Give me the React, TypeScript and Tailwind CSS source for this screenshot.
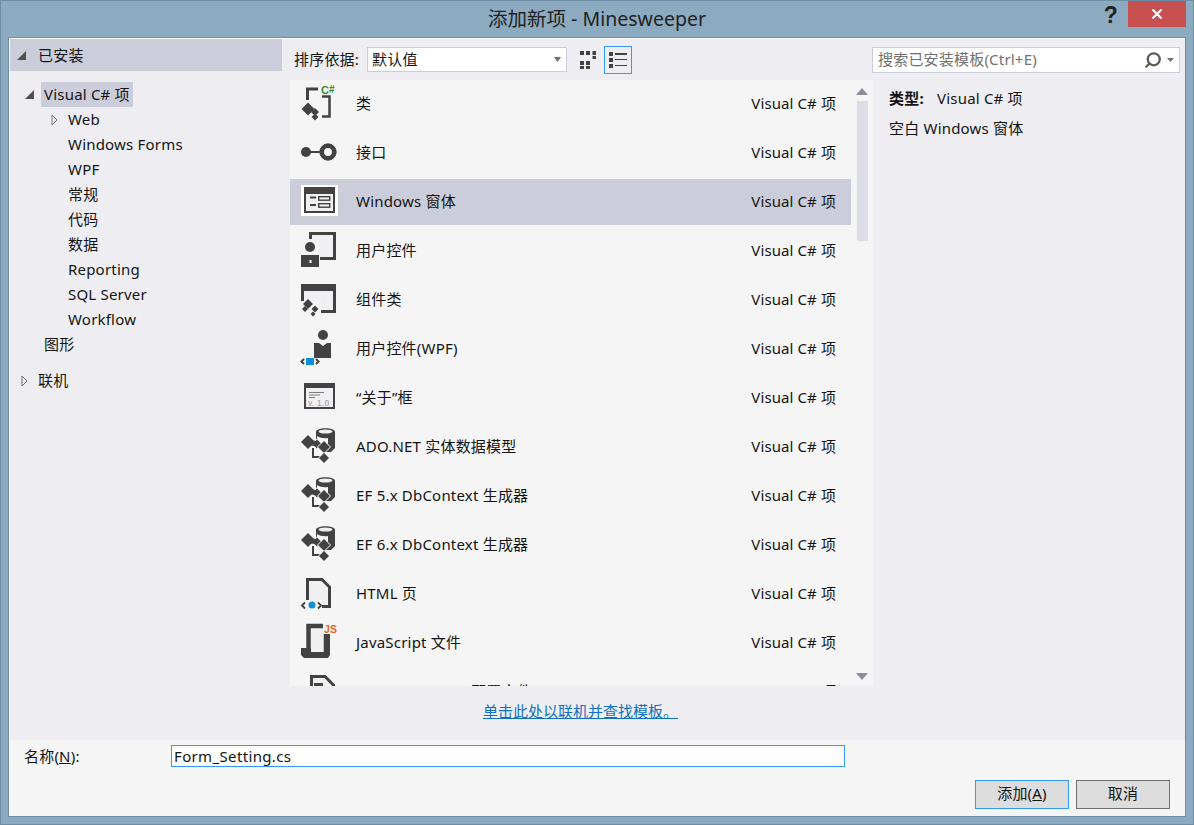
import { Search } from 'lucide-react';
import type { ReactNode } from 'react';

const FONT = { fontFamily: '"Noto Sans", "Noto Sans CJK SC", sans-serif' };

const INK = '#424242';
const FILL = '#f0eff1';
const BG = '#f5f5f5';

function Diamond({ x, y, r, halo }: { x: number; y: number; r: number; halo?: boolean }) {
  return (
    <path
      d={`M${x - r} ${y}L${x} ${y - r}L${x + r} ${y}L${x} ${y + r}Z`}
      fill={INK}
      stroke={halo ? BG : 'none'}
      strokeWidth={halo ? 1.5 : 0}
      paintOrder="stroke"
    />
  );
}

const ClassIcon = (
  <>
    <path d="M18 8H7.5V19" fill="none" stroke={INK} strokeWidth="3" />
    <path d="M22 15.5H29.5V35.5H22" fill="none" stroke={INK} strokeWidth="2.5" />
    <Diamond x={8} y={28} r={6.5} />
    <Diamond x={15} y={31} r={4} />
    <Diamond x={15} y={36} r={3.5} />
    <text x="21" y="13" fontSize="11" fontWeight="700" fill="#388a34" fontFamily="Liberation Sans">C</text>
    <text x="29" y="12" fontSize="10" fontWeight="700" fill="#388a34" fontFamily="Liberation Sans">#</text>
  </>
);

const InterfaceIcon = (
  <>
    <circle cx="6" cy="22" r="5" fill={INK} />
    <path d="M10 22H20" stroke={INK} strokeWidth="2" />
    <circle cx="28" cy="22" r="6.3" fill="none" stroke={INK} strokeWidth="4.7" />
  </>
);

const FormIcon = (
  <>
    <rect x="1" y="6" width="37" height="31" fill="#fff" />
    <rect x="4" y="8" width="31" height="26" fill={INK} />
    <rect x="6" y="15" width="27" height="17" fill={FILL} />
    <path d="M10 18.5H16M10 26H16" stroke={INK} strokeWidth="2" />
    <rect x="18.7" y="17.7" width="11" height="3.5" fill="none" stroke={INK} strokeWidth="1.4" />
    <rect x="18.7" y="24.7" width="11" height="3.5" fill="none" stroke={INK} strokeWidth="1.4" />
  </>
);

const UserControlIcon = (
  <>
    <rect x="10" y="5" width="25" height="26" fill={FILL} />
    <path d="M10.5 11V5.5H34.5V30.5H20" fill="none" stroke={INK} strokeWidth="3" />
    <rect x="3" y="12" width="16" height="14" fill={BG} />
    <circle cx="10" cy="19" r="5" fill={INK} />
    <path d="M1 27H19V39H1Z" fill={INK} />
    <rect x="9.5" y="32" width="2" height="3" fill="#fff" />
  </>
);

const ComponentIcon = (
  <>
    <rect x="1" y="7" width="35" height="29" fill={INK} />
    <rect x="4" y="14" width="29" height="19" fill={FILL} />
    <rect x="0" y="24" width="21" height="14" fill={BG} />
    <Diamond x={8} y={27} r={5} />
    <Diamond x={15} y={32} r={3.5} />
    <Diamond x={5} y={32} r={3} />
    <Diamond x={13} y={37} r={2.5} />
  </>
);

const WpfControlIcon = (
  <>
    <circle cx="23" cy="9" r="5" fill={INK} />
    <path d="M14 17H19L23 20L27 17H31V32H14Z" fill={INK} />
    <rect x="6" y="32" width="8" height="7" fill="#0e8fd8" />
    <path d="M4 33L1.5 35.5L4 38M16 33L18.5 35.5L16 38" fill="none" stroke={INK} strokeWidth="2" />
  </>
);

const AboutIcon = (
  <>
    <rect x="4" y="8" width="31" height="26" fill={INK} />
    <rect x="6" y="13" width="27" height="19" fill={FILL} />
    <path d="M9 17.5H24M9 20H20M9 22.5H15" stroke="#7d7d7d" strokeWidth="1" />
    <text x="8" y="31" fontSize="8.5" fill="#9a9a9a" fontFamily="Liberation Sans">v. 1.0</text>
  </>
);

const EntityIcon = (
  <>
    <path d="M16 8C16 3 35 3 35 8V24L31 28H24L16 14Z" fill={INK} />
    <ellipse cx="25.5" cy="7.5" rx="7" ry="2" fill={FILL} />
    <path d="M17 12C20 14 24 14.5 28 14V22H17Z" fill={BG} />
    <path d="M13 24V33H20" fill="none" stroke={INK} strokeWidth="2" />
    <path d="M8 18L17 20" stroke={INK} strokeWidth="5" />
    <Diamond x={8} y={18} r={7} />
    <Diamond x={17} y={20} r={4.5} />
    <Diamond x={24} y={23} r={6} halo />
    <Diamond x={24} y={34} r={5} halo />
  </>
);

const HtmlIcon = (
  <>
    <path d="M7.5 31V8.5H22L29.5 16V35.5H22" fill={FILL} stroke={INK} strokeWidth="3" />
    <rect x="0" y="29" width="22" height="10" fill={BG} />
    <circle cx="12" cy="34" r="3.5" fill="#0e8fd8" />
    <path d="M5 31.5L2 34.5L5 37.5M18 31.5L21 34.5L18 37.5" fill="none" stroke={INK} strokeWidth="1.8" />
  </>
);

const JsIcon = (
  <>
    <path d="M8.5 29V6H26V32" fill={FILL} stroke={INK} strokeWidth="4.5" />
    <path d="M1 28H11V32H26V14H30V35L28 38H4L1 35Z" fill={INK} />
    <rect x="23" y="3" width="14" height="11" fill={BG} />
    <text x="24" y="13" fontSize="10.5" fontWeight="700" fill="#e9622a" fontFamily="Liberation Sans">JS</text>
  </>
);

const PageIcon = (
  <>
    <path d="M11.5 34V7.5H25L33.5 16V34" fill={FILL} stroke={INK} strokeWidth="3" />
    <path d="M14 15.5H23" stroke={INK} strokeWidth="3" />
  </>
);

const rows: { name: string; icon: ReactNode }[] = [
  { name: '类', icon: ClassIcon },
  { name: '接口', icon: InterfaceIcon },
  { name: 'Windows 窗体', icon: FormIcon },
  { name: '用户控件', icon: UserControlIcon },
  { name: '组件类', icon: ComponentIcon },
  { name: '用户控件(WPF)', icon: WpfControlIcon },
  { name: '“关于”框', icon: AboutIcon },
  { name: 'ADO.NET 实体数据模型', icon: EntityIcon },
  { name: 'EF 5.x DbContext 生成器', icon: EntityIcon },
  { name: 'EF 6.x DbContext 生成器', icon: EntityIcon },
  { name: 'HTML 页', icon: HtmlIcon },
  { name: 'JavaScript 文件', icon: JsIcon },
  { name: 'JavaScript JSON 配置文件', icon: PageIcon },
];

function Expanded() {
  return (
    <svg width="9" height="9" viewBox="0 0 9 9" className="shrink-0">
      <path d="M9 0V9H0Z" fill="#505050" />
    </svg>
  );
}

function Collapsed() {
  return (
    <svg width="7" height="12" viewBox="0 0 7 12" className="shrink-0">
      <path d="M1 1L6 6L1 11Z" fill="#f5f5f5" stroke="#707070" />
    </svg>
  );
}

function TreeRow({ label, pad, arrow, selected }: { label: string; pad: string; arrow?: ReactNode; selected?: boolean }) {
  return (
    <div className={`h-[25px] flex items-center ${pad}`}>
      {arrow}
      <span className={selected ? 'bg-[#cbcddb] h-[25px] px-[3px] flex items-center' : ''}>{label}</span>
    </div>
  );
}

export default function App() {
  return (
    <div style={FONT} className="w-[1194px] h-[825px] bg-[#8cabc0] border border-[#6f8ea6] flex flex-col text-[15px] tracking-[0.2px] text-[#141414] overflow-hidden">
      {/* Title bar */}
      <div className="h-[36px] shrink-0 relative flex items-center justify-center">
        <span className="text-[19.5px] tracking-normal text-[#222]">添加新项 - Minesweeper</span>
        <div className="absolute right-[7px] top-0 flex items-start">
          <span className="text-[23px] font-bold text-[#222] leading-[26px] mr-[10px] mt-[1px]" style={{ fontFamily: 'Liberation Sans' }}>?</span>
          <div className="w-[58px] h-[26px] bg-[#c75050] flex items-center justify-center">
            <svg width="12" height="10" viewBox="0 0 12 10">
              <path d="M1.5 0.5L10.5 9.5M10.5 0.5L1.5 9.5" stroke="#fff" strokeWidth="2.2" />
            </svg>
          </div>
        </div>
      </div>

      {/* Body */}
      <div className="w-[1178px] ml-[7px] h-[780px] border border-[#6f8ea6] flex flex-col">
        <div className="flex-1 min-h-0 border-t border-l border-t-white border-l-white bg-[#eeeef2] flex flex-col">
          <div className="flex-1 flex min-h-0">
            {/* Left tree */}
            <div className="w-[272px] shrink-0">
              <div className="h-[32px] bg-[#cbcddb] flex items-center gap-[12px] pl-[7px]">
                <Expanded />
                <span>已安装</span>
              </div>
              <div className="mt-[11px]">
                <TreeRow label="Visual C# 项" pad="pl-[15px] gap-[7px]" arrow={<Expanded />} selected />
                <TreeRow label="Web" pad="pl-[41px] gap-[10px]" arrow={<Collapsed />} />
                {['Windows Forms', 'WPF', '常规', '代码', '数据', 'Reporting', 'SQL Server', 'Workflow'].map((l) => (
                  <TreeRow key={l} label={l} pad="pl-[58px]" />
                ))}
                <TreeRow label="图形" pad="pl-[34px]" />
                <div className="h-[11px]" />
                <TreeRow label="联机" pad="pl-[11px] gap-[10px]" arrow={<Collapsed />} />
              </div>
            </div>

            {/* Middle */}
            <div className="w-[583px] shrink-0 ml-[8px] flex flex-col">
              <div className="h-[41px] shrink-0 flex items-center">
                <span className="ml-[4px] w-[73px] whitespace-nowrap">排序依据:</span>
                <div className="w-[200px] h-[25px] bg-white border border-[#cbcddb] flex items-center justify-between pl-[4px] pr-[5px]">
                  <span>默认值</span>
                  <svg width="7" height="5" viewBox="0 0 7 5"><path d="M0 0H7L3.5 5Z" fill="#707070" /></svg>
                </div>
                <div className="ml-[8px] w-[28px] h-[28px] flex items-center justify-center">
                  <svg width="18" height="18" viewBox="0 0 18 18" fill={INK}>
                    <rect x="0" y="0" width="4" height="4" /><rect x="6" y="0" width="4" height="4" /><rect x="12.5" y="0" width="3.5" height="4" /><rect x="12.5" y="5" width="3.5" height="3" />
                    <rect x="0" y="10" width="4" height="4" /><rect x="6" y="10" width="4" height="4" />
                    <rect x="0" y="15" width="4" height="3" /><rect x="6" y="15" width="4" height="3" />
                  </svg>
                </div>
                <div className="ml-[1px] w-[28px] h-[28px] border border-[#3399ff] flex items-center justify-center">
                  <svg width="18" height="16" viewBox="0 0 18 16" fill={INK}>
                    <rect x="0" y="0" width="4" height="4" /><rect x="6" y="1" width="12" height="2" />
                    <rect x="0" y="6" width="4" height="4" /><rect x="6" y="7" width="12" height="1" />
                    <rect x="0" y="12" width="4" height="4" /><rect x="6" y="13" width="12" height="1" />
                  </svg>
                </div>
              </div>

              <div className="h-[606px] shrink-0 bg-[#f5f5f5] flex overflow-hidden">
                <div className="w-[561px] shrink-0 pt-[1px]">
                  {rows.map((r) => {
                    const selected = r.name === 'Windows 窗体';
                    return (
                      <div key={r.name} className={`h-[46px] mb-[3px] flex items-center ${selected ? 'bg-[#cbcddb]' : ''}`}>
                        <svg width="40" height="46" viewBox="0 0 40 46" className="ml-[10px] shrink-0">{r.icon}</svg>
                        <span className="ml-[16px] mb-[2px] flex-1 whitespace-nowrap">{r.name}</span>
                        <span className="mr-[15px] mb-[2px] whitespace-nowrap tracking-[0.1px]">Visual C# 项</span>
                      </div>
                    );
                  })}
                </div>
                <div className="flex-1 flex flex-col items-center">
                  <svg width="12" height="7" viewBox="0 0 12 7" className="mt-[8px]"><path d="M6 0L12 7H0Z" fill="#8b8b9c" /></svg>
                  <div className="w-[11px] h-[140px] bg-[#dcdde6] mt-[6px]" />
                  <div className="flex-1" />
                  <svg width="12" height="7" viewBox="0 0 12 7" className="mb-[6px]"><path d="M0 0H12L6 7Z" fill="#8b8b9c" /></svg>
                </div>
              </div>

              <div className="flex-1 flex items-center justify-center pr-[2px] pb-[4px]">
                <span className="text-[#0e70c0] underline tracking-normal">单击此处以联机并查找模板。</span>
              </div>
            </div>

            {/* Right */}
            <div className="flex-1 min-w-0">
              <div className="h-[26px] mt-[8px] -ml-[1px] mr-[5px] mb-[14px] bg-white border border-[#cbcddb] flex items-center pl-[5px] pr-[5px] text-[#717171]">
                <span className="flex-1 mb-[2px]">搜索已安装模板(Ctrl+E)</span>
                <Search size={18} strokeWidth={3} color="#5a5a5a" className="-scale-x-100" />
                <svg width="7" height="4" viewBox="0 0 7 4" className="ml-[5px]"><path d="M0 0H7L3.5 4Z" fill="#707070" /></svg>
              </div>
              <div className="flex h-[22px] items-center pl-[16px]">
                <span className="font-bold w-[48px]">类型:</span>
                <span>Visual C# 项</span>
              </div>
              <div className="mt-[8px] h-[22px] flex items-center pl-[16px]">空白 Windows 窗体</div>
            </div>
          </div>

          {/* Footer */}
          <div className="h-[76px] shrink-0 bg-[#f5f5f5]">
            <div className="flex items-center h-[22px] mt-[5px] pl-[14px]">
              <span className="w-[147px]">名称(<span className="underline">N</span>):</span>
              <div className="w-[674px] h-[22px] bg-white border border-[#3399ff] flex items-center pl-[2px] tracking-[0.35px]">Form_Setting.cs</div>
            </div>
            <div className="flex justify-end gap-[7px] mt-[13px] pr-[15px]">
              <div className="w-[94px] h-[29px] bg-[#dddddd] border border-[#3399ff] flex items-center justify-center pb-[2px]">添加(<span className="underline">A</span>)</div>
              <div className="w-[94px] h-[29px] bg-[#dddddd] border border-[#707070] flex items-center justify-center pb-[2px]">取消</div>
            </div>
          </div>
        </div>
      </div>
    </div>
  );
}
